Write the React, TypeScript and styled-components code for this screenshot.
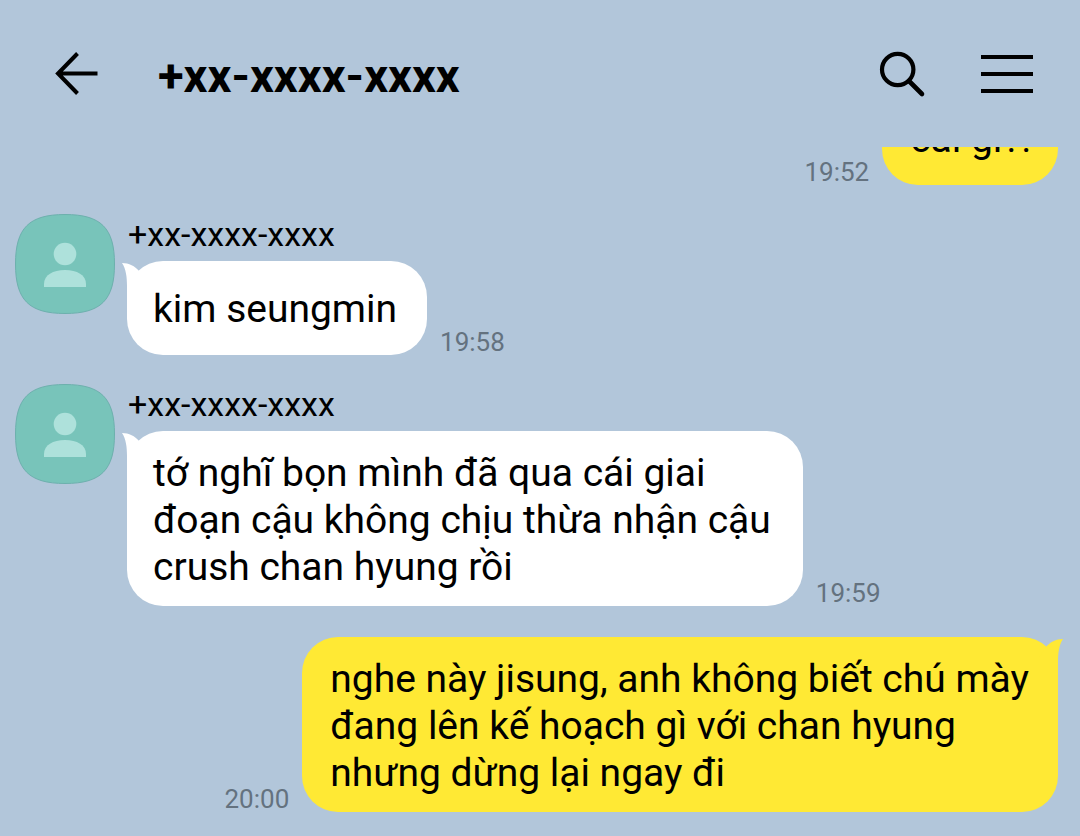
import React from "react";
import styled, { createGlobalStyle, css } from "styled-components";

const GlobalStyle = createGlobalStyle`
  *, *::before, *::after { box-sizing: border-box; }
  body { margin: 0; background: #b2c6da; }
`;

const Screen = styled.div`
  display: flex;
  flex-direction: column;
  height: 100vh;
  background: #b2c6da;
  color: #000;
  font-family: Roboto, "Noto Sans", sans-serif;
`;

const Header = styled.header`
  flex: none;
  display: flex;
  align-items: center;
  padding: 44px 39px 43px 42px;
`;

const Title = styled.h1`
  flex: 1;
  margin: 0 0 0 48px;
  padding-top: 4px;
  font-size: 47px;
  font-weight: 700;
  line-height: 56px;
`;

const IconButton = styled.button`
  display: flex;
  align-items: center;
  justify-content: center;
  width: 68px;
  height: 60px;
  padding: 0;
  border: 0;
  background: none;
  color: #000;
  cursor: pointer;
`;

const Actions = styled.div`
  display: flex;
  gap: 37px;
`;

/* The newest message stays at the bottom; older ones run out under the header. */
const Conversation = styled.main`
  flex: 1;
  min-height: 0;
  display: flex;
  flex-direction: column;
  justify-content: flex-end;
  gap: 29px;
  padding: 0 22px 24px 15px;
  overflow: hidden;
`;

const Row = styled.article<{ $sent?: boolean }>`
  flex: none;
  display: flex;
  align-items: flex-start;
  gap: 12px;
  ${({ $sent }) =>
    $sent &&
    css`
      justify-content: flex-end;
      padding-top: 2px;
    `}
`;

const Sender = styled.h2`
  margin: 0 0 7px 1px;
  font-size: 34px;
  font-weight: 400;
  line-height: 40px;
`;

const BubbleLine = styled.div<{ $sent?: boolean }>`
  display: flex;
  flex-direction: ${({ $sent }) => ($sent ? "row-reverse" : "row")};
  align-items: flex-end;
  gap: 13px;
`;

const Bubble = styled.div<{ $sent?: boolean; $multiline?: boolean }>`
  position: relative;
  display: flex;
  align-items: center;
  min-height: 94px;
  padding: ${({ $sent }) => ($sent ? "0 27px 0 28px" : "0 30px 0 26px")};
  padding-top: ${({ $multiline }) => ($multiline ? "19px" : "18px")};
  padding-bottom: ${({ $multiline }) => ($multiline ? "15px" : "16px")};
  border-radius: 36px;
  background: ${({ $sent }) => ($sent ? "#ffe934" : "#fff")};
  color: ${({ $sent }) => ($sent ? "#ffe934" : "#fff")};
`;

const Text = styled.p<{ $multiline?: boolean }>`
  margin: 0;
  padding-right: ${({ $multiline }) => ($multiline ? "2px" : "0")};
  color: #000;
  font-size: 39px;
  line-height: 47px;
  white-space: pre-line;
`;

const TailSvg = styled.svg<{ $sent?: boolean }>`
  position: absolute;
  top: 2px;
  ${({ $sent }) => ($sent ? "right: -5px; transform: scaleX(-1);" : "left: -5px;")}
`;

const Time = styled.time`
  color: #64727f;
  font-size: 26px;
  line-height: 26px;
`;

const AvatarSvg = styled.svg`
  flex: none;
  display: block;
`;

const Avatar = () => (
  <AvatarSvg width="100" height="100" viewBox="0 0 100 100" aria-hidden="true">
    <path
      d="M50 .5C86 .5 99.500 14 99.500 50S86 99.500 50 99.500.5 86 .5 50 14 .5 50 .5Z"
      fill="#78c4ba"
      stroke="#6db0ad"
    />
    <circle cx="50" cy="40" r="11.300" fill="#aee1db" />
    <path d="M29 73V70C29 61 38 56 50 56S71 61 71 70V73Z" fill="#aee1db" />
  </AvatarSvg>
);

const Tail = ({ sent }: { sent?: boolean }) => (
  <TailSvg $sent={sent} width="24" height="36" viewBox="0 0 24 36" aria-hidden="true">
    <path d="M0 0C7 0 13 3 17 8L24 18V36H5V23C5 14 4 6 0 0Z" fill="currentColor" />
  </TailSvg>
);

type Message = { text: string; time: string; sender?: string };

const messages: Message[] = [
  { text: "cái gì?!", time: "19:52" },
  { sender: "+xx-xxxx-xxxx", text: "kim seungmin", time: "19:58" },
  {
    sender: "+xx-xxxx-xxxx",
    text: "tớ nghĩ bọn mình đã qua cái giai\nđoạn cậu không chịu thừa nhận cậu\ncrush chan hyung rồi",
    time: "19:59",
  },
  {
    text: "nghe này jisung, anh không biết chú mày\nđang lên kế hoạch gì với chan hyung\nnhưng dừng lại ngay đi",
    time: "20:00",
  },
];

const ChatMessage = ({ text, time, sender }: Message) => {
  const sent = !sender;
  const multiline = text.includes("\n");
  return (
    <Row $sent={sent}>
      {sender && <Avatar />}
      <div>
        {sender && <Sender>{sender}</Sender>}
        <BubbleLine $sent={sent}>
          <Bubble $sent={sent} $multiline={multiline}>
            <Tail sent={sent} />
            <Text $multiline={multiline}>{text}</Text>
          </Bubble>
          <Time>{time}</Time>
        </BubbleLine>
      </div>
    </Row>
  );
};

export default function App() {
  return (
    <Screen lang="vi">
      <GlobalStyle />
      <Header>
        <IconButton type="button" aria-label="Back">
          <svg width="44" height="44" viewBox="0 0 44 44" fill="none" stroke="currentColor" strokeWidth="4">
            <path d="M23.500 1.500L4 21.500L23.500 41.500M4 21.500H43.500" />
          </svg>
        </IconButton>
        <Title>+xx-xxxx-xxxx</Title>
        <Actions>
          <IconButton type="button" aria-label="Search">
            <svg width="48" height="48" viewBox="0 0 48 48" fill="none" stroke="currentColor">
              <circle cx="19.700" cy="19.500" r="15.700" strokeWidth="4.200" />
              <path d="M31 31L44 44" strokeWidth="4.600" strokeLinecap="round" />
            </svg>
          </IconButton>
          <IconButton type="button" aria-label="Menu">
            <svg width="52" height="44" viewBox="0 0 52 44" fill="none" stroke="currentColor" strokeWidth="4">
              <path d="M0 5H52M0 22H52M0 39H52" />
            </svg>
          </IconButton>
        </Actions>
      </Header>
      <Conversation>
        {messages.map((message) => (
          <ChatMessage key={message.time} {...message} />
        ))}
      </Conversation>
    </Screen>
  );
}
